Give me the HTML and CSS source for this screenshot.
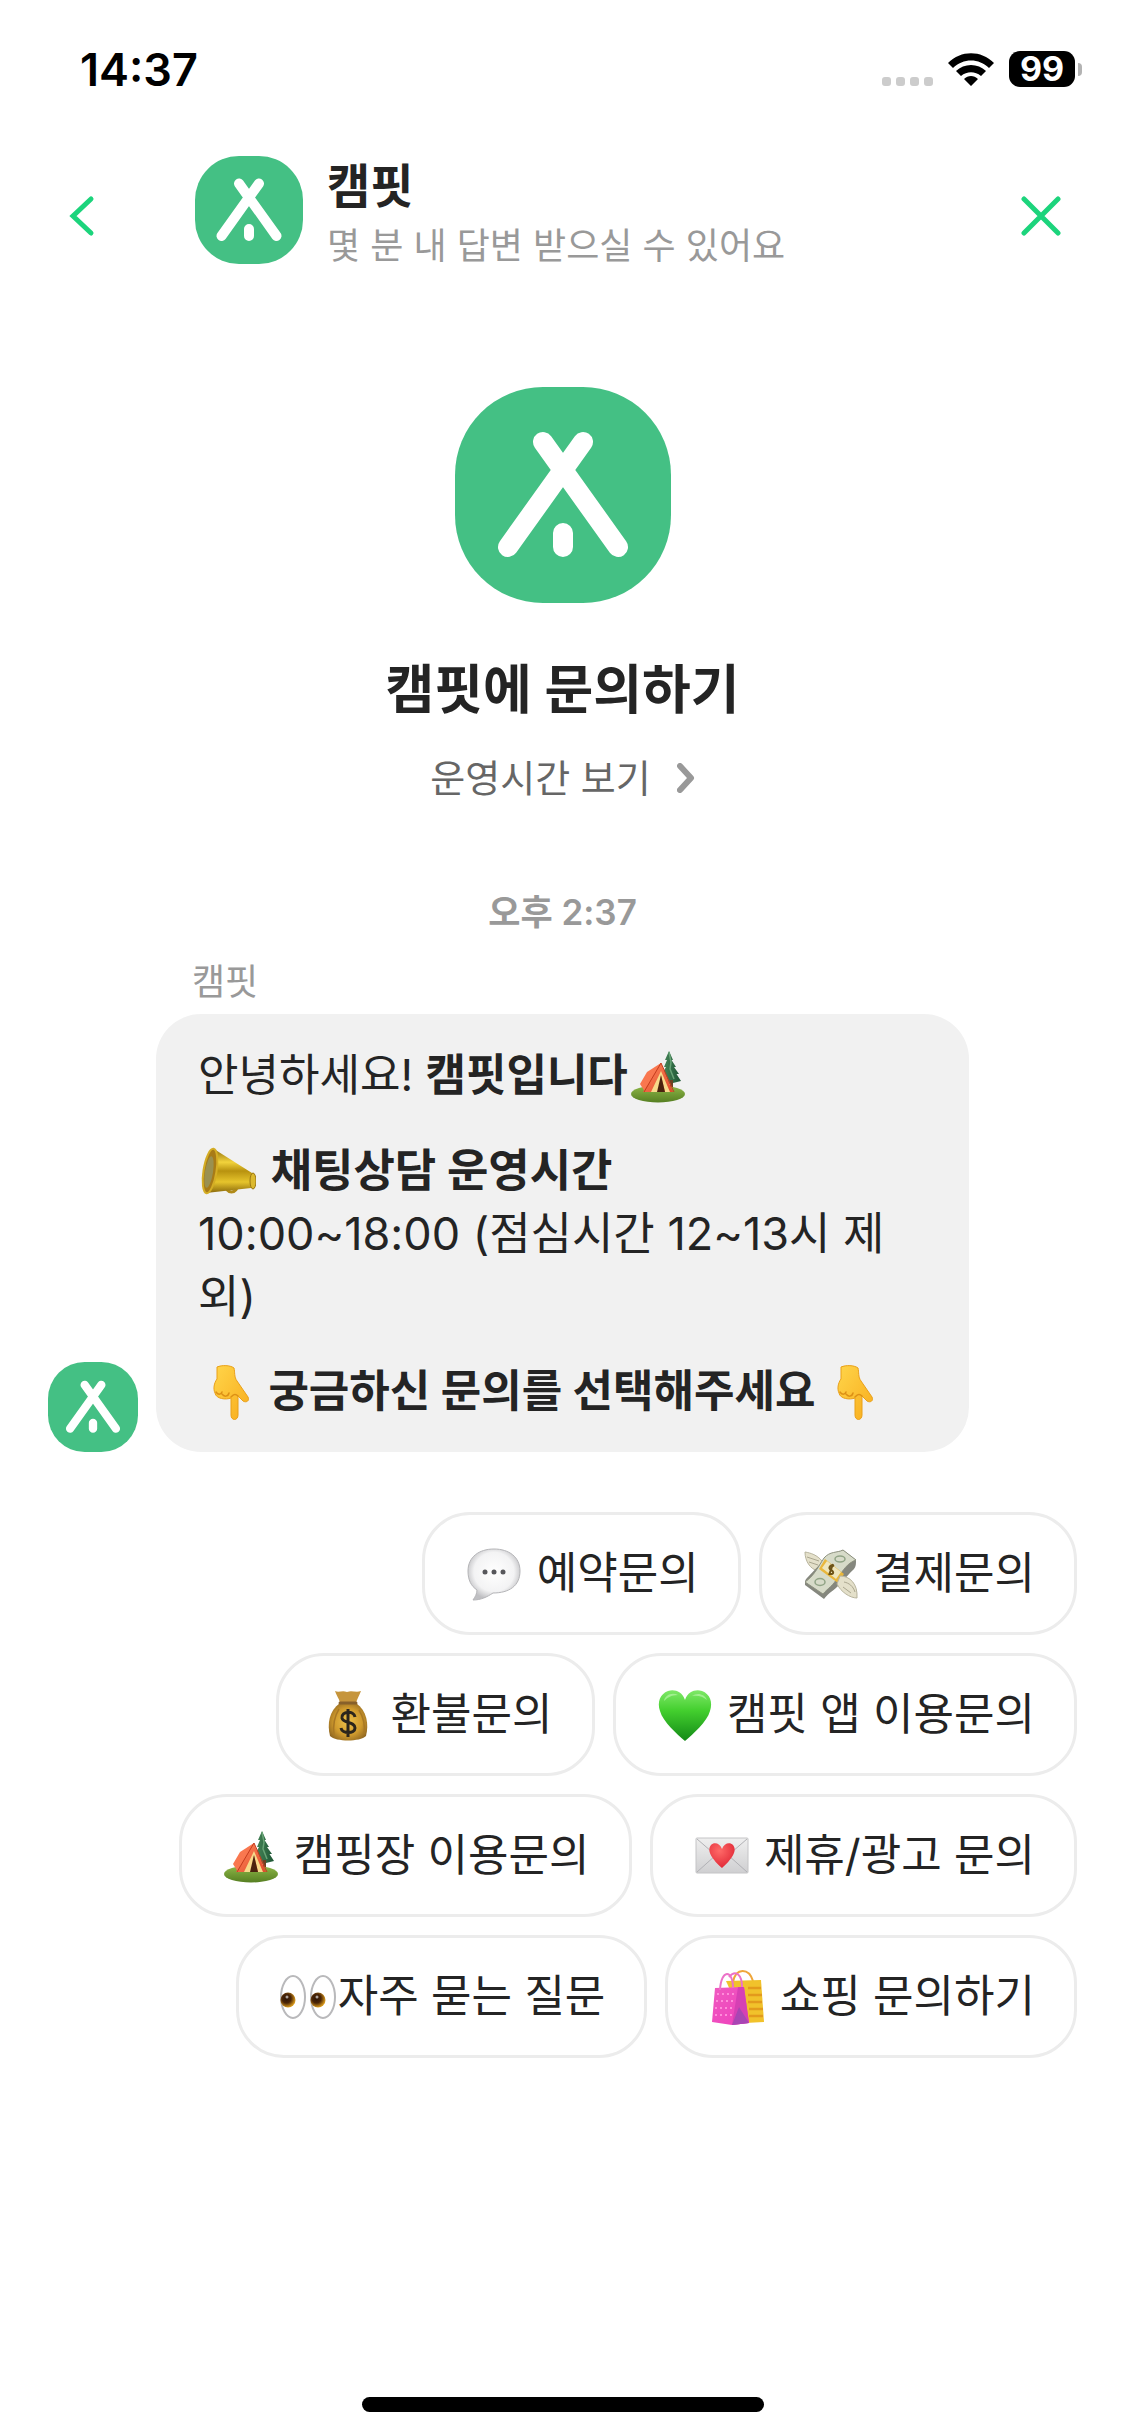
FILE: index.html
```html
<!DOCTYPE html>
<html lang="ko">
<head>
<meta charset="utf-8">
<meta name="viewport" content="width=device-width, initial-scale=1">
<title>캠핏 문의</title>
<link rel="stylesheet" href="styles.css">
</head>
<body>
<svg class="defs" aria-hidden="true">
  <defs>
    <linearGradient id="gold" x1="0" y1="0" x2="0" y2="1"><stop offset="0" stop-color="#8f6d0c"/><stop offset=".3" stop-color="#f2d33c"/><stop offset=".5" stop-color="#b8920f"/><stop offset=".75" stop-color="#e6c42c"/><stop offset="1" stop-color="#8a690b"/></linearGradient>
    <linearGradient id="tentRed" x1="0" y1="0" x2="1" y2="1"><stop offset="0" stop-color="#ff8a5c"/><stop offset="1" stop-color="#e2492b"/></linearGradient>
    <linearGradient id="grass" x1="0" y1="0" x2="0" y2="1"><stop offset="0" stop-color="#8fb848"/><stop offset="1" stop-color="#567f22"/></linearGradient>
    <linearGradient id="pine" x1="0" y1="0" x2="1" y2="0"><stop offset="0" stop-color="#4b8a5c"/><stop offset="1" stop-color="#1d5534"/></linearGradient>
    <linearGradient id="skin" x1="0" y1="0" x2="1" y2="1"><stop offset="0" stop-color="#ffd54a"/><stop offset="1" stop-color="#f8ac1c"/></linearGradient>
    <radialGradient id="speech" cx=".5" cy=".45" r=".55"><stop offset="0" stop-color="#fff"/><stop offset=".7" stop-color="#f3f3f4"/><stop offset="1" stop-color="#bfbfc2"/></radialGradient>
    <linearGradient id="heartGreen" x1="0" y1="0" x2="0" y2="1"><stop offset="0" stop-color="#7fe868"/><stop offset=".4" stop-color="#43cf2e"/><stop offset="1" stop-color="#138a17"/></linearGradient>
    <radialGradient id="bag" cx=".5" cy=".5" r=".6"><stop offset="0" stop-color="#eec24a"/><stop offset=".6" stop-color="#cf9a2d"/><stop offset="1" stop-color="#8d6420"/></radialGradient>
    <linearGradient id="paper" x1="0" y1="0" x2="0" y2="1"><stop offset="0" stop-color="#efefef"/><stop offset="1" stop-color="#cfcfd1"/></linearGradient>
    <radialGradient id="heartRed" cx=".4" cy=".3" r=".8"><stop offset="0" stop-color="#ff6a68"/><stop offset="1" stop-color="#dd2030"/></radialGradient>
    <radialGradient id="iris" cx=".4" cy=".4" r=".6"><stop offset="0" stop-color="#2b1304"/><stop offset=".5" stop-color="#4a2406"/><stop offset="1" stop-color="#d99a1c"/></radialGradient>
    <linearGradient id="pink" x1="0" y1="0" x2="1" y2="1"><stop offset="0" stop-color="#f05ac0"/><stop offset="1" stop-color="#ee3fbd"/></linearGradient>
  </defs>

  <symbol id="logo" viewBox="0 0 216 216">
    <rect width="216" height="216" rx="88" fill="#44c084"/>
    <path d="M88 55 163 160M128 55 53 160M108 146V160" fill="none" stroke="#fff" stroke-width="20" stroke-linecap="round"/>
  </symbol>

  <symbol id="tent" viewBox="0 0 56 56">
    <ellipse cx="28" cy="45" rx="27" ry="8.500" fill="url(#grass)"/>
    <path d="M39 2 43 11 41.500 11 46 18 44 18 49 25 46.500 25 51 32 39 35 31 31 34 25 32 25 36 18 34 18 37 11 35 11Z" fill="url(#pine)"/>
    <path d="M39 3 41 13 40 20 44 30" stroke="#68a476" stroke-width="1.500" fill="none"/>
    <path d="M40 31H43V38H40Z" fill="#6b4224"/>
    <path d="M17 23 31 14 15 43 10 35Z" fill="#f9774f"/>
    <path d="M31 14 13 43 43 43Z" fill="url(#tentRed)"/>
    <path d="M31 22 21 43H28L31 27 35 43H40Z" fill="#f7d98a"/>
    <path d="M31 26 27 43H35Z" fill="#4b230f"/>
    <path d="M31 14 14 43M31 14 44 43" stroke="#c53b1d" stroke-width="1"/>
  </symbol>

  <symbol id="megaphone" viewBox="0 0 56 56">
    <path d="M25 38C25 50 38 50 38 38" fill="none" stroke="#b08a18" stroke-width="3"/>
    <path d="M14 4 52 28C56 30 55 42 51 43L6 48C-1 38 4 8 14 4Z" fill="url(#gold)"/>
    <ellipse cx="10" cy="26" rx="6.500" ry="22.500" transform="rotate(9 10 26)" fill="#a87b17" stroke="#d4ad25" stroke-width="2"/>
    <ellipse cx="9" cy="27" rx="4" ry="16" transform="rotate(9 9 27)" fill="#9a9050"/>
    <ellipse cx="53" cy="36" rx="3" ry="8" fill="#dcb92e" stroke="#9a7611" stroke-width="1"/>
  </symbol>

  <symbol id="hand" viewBox="-2 0 56 56">
    <path d="M13 2C18 0 26 0 30 3 31 7 30 12 33 16L44 32C46 36 42 38 39 36L34 31V50C34 56 27 56 27 50V33C22 35 12 34 11 28 9 24 10 18 13 14Z" fill="url(#skin)" stroke="#e9a019" stroke-width="1"/>
    <path d="M12 27C14 30 17 30 18 27M18 29C20 32 24 32 25 28M27 32C29 30 31 28 34 31" fill="none" stroke="#dd9015" stroke-width="1.500" stroke-linecap="round"/>
  </symbol>

  <symbol id="bubble" viewBox="0 0 56 56">
    <path d="M28 2C43 2 54 10 54 24 54 39 43 46 27 46 21 50 15 53 7 53 9 50 11 47 11 43 5 39 2 33 2 24 2 10 13 2 28 2Z" fill="url(#speech)" stroke="#b5b5b8" stroke-width="1"/>
    <g fill="#57575b"><circle cx="19" cy="25" r="2.500"/><circle cx="28" cy="25" r="2.500"/><circle cx="37" cy="25" r="2.500"/></g>
  </symbol>

  <symbol id="cash" viewBox="0 0 56 56">
    <path d="M2 5C8 6 14 8 19 14L15 24C7 22 2 14 2 5Z" fill="#e4e0ca" stroke="#b8b49d" stroke-width="1"/>
    <path d="M4 10 16 14M6 15 15 18" stroke="#aaa68f" stroke-width="1"/>
    <path d="M21 13C27 6 34 6 40 3L53 13C53 17 53 19 51 22 46 27 42 31 37 37 31 44 26 45 21 52L2 38C2 34 2 33 4 31Z" fill="#85877e"/>
    <path d="M21 11C27 4 34 6 40 3L53 13C44 16 40 24 35 30 30 39 25 41 20 47L2 35C11 29 15 20 21 11Z" fill="#d7dbc9" stroke="#8d917f" stroke-width="1"/>
    <ellipse cx="37" cy="12" rx="5" ry="3" fill="none" stroke="#91a486" stroke-width="1.500"/>
    <ellipse cx="17" cy="35" rx="5" ry="3.500" fill="none" stroke="#91a486" stroke-width="1.500"/>
    <path d="M22 12 41 27 35 36 16 22Z" fill="#e9b73c"/>
    <path d="M24 14 38 25 33 32 19 21Z" fill="#efe6bd"/>
    <path d="M31 19C27 17 25 21 28 23 32 25 30 29 26 26M30 17 26 28" fill="none" stroke="#6e5418" stroke-width="2"/>
    <path d="M37 29C47 29 55 37 54 51 47 51 38 45 34 37Z" fill="#e4e0ca" stroke="#b8b49d" stroke-width="1"/>
    <path d="M41 35C46 36 50 39 52 45M40 40 48 46" fill="none" stroke="#aaa68f" stroke-width="1"/>
  </symbol>

  <symbol id="moneybag" viewBox="0 0 56 56">
    <path d="M20 15C9 23 7 36 10 48 16 54 40 54 46 48 49 36 47 23 36 15Z" fill="url(#bag)"/>
    <path d="M15 3C19 5 22 2 27 4 32 2 36 5 41 3 39 8 37 11 36 15H20C19 10 16 7 15 3Z" fill="#c6953c"/>
    <path d="M20 15H36" stroke="#87602a" stroke-width="3" stroke-linecap="round"/>
    <path d="M19 21C14 29 13 39 14 47M39 22C44 30 45 39 44 46" fill="none" stroke="#a87824" stroke-width="1.500"/>
    <path d="M35 29C34 22 21 23 22 30 23 36 35 33 35 40 35 46 22 46 21 40M28 21V49" fill="none" stroke="#2b251c" stroke-width="3"/>
  </symbol>

  <symbol id="heart" viewBox="0 0 56 56">
    <path d="M28 12C31 3 39 1 45 3 53 6 56 14 53 23 50 34 36 46 28 53 20 46 6 34 3 23 0 14 3 6 11 3 17 1 25 3 28 12Z" fill="url(#heartGreen)"/>
    <path d="M7 13C8 7 15 4 21 7 14 7 10 10 7 13ZM35 8C40 4 48 6 50 12 46 8 40 7 35 8Z" fill="#b6f5a6" opacity=".7"/>
  </symbol>

  <symbol id="letter" viewBox="0 0 56 56">
    <rect x="2" y="9" width="52" height="35" rx="1" fill="url(#paper)" stroke="#c4c4c6" stroke-width="1"/>
    <path d="M3 43 22 26M53 43 34 26M3 10 25 29Q28 31 31 29L53 10" fill="none" stroke="#b1b1b5" stroke-width="1"/>
    <path d="M28 20C30 14 36 13 39 16 44 22 37 31 28 39 19 31 12 22 17 16 20 13 26 14 28 20Z" fill="url(#heartRed)"/>
  </symbol>

  <symbol id="eyes" viewBox="0 0 56 56">
    <g fill="#fff" stroke="#b9b9bb" stroke-width="2"><ellipse cx="13" cy="27" rx="12" ry="21"/><ellipse cx="43" cy="27" rx="12" ry="21"/></g>
    <circle cx="8" cy="30" r="7.500" fill="url(#iris)"/><circle cx="38" cy="30" r="7.500" fill="url(#iris)"/>
    <circle cx="7" cy="27" r="1.500" fill="#fff" opacity=".6"/><circle cx="37" cy="27" r="1.500" fill="#fff" opacity=".6"/>
  </symbol>

  <symbol id="shopping" viewBox="0 0 56 56">
    <path d="M24 12C27-3 40-2 44 11" fill="none" stroke="#efa63a" stroke-width="2"/>
    <path d="M17 11 52 10 55 52 36 53Z" fill="#f1c22b"/>
    <path d="M39 18H52M39 25H53M39 32H53M40 39H54M40 46H54" stroke="#e39a1c" stroke-width="2.500"/>
    <path d="M6 18 35 17 40 53 23 55 3 52Z" fill="url(#pink)"/>
    <path d="M29 17 35 17 40 53 23 55Z" fill="#d640b4"/>
    <path d="M30 37 40 53 23 55Z" fill="#a846b4"/>
    <path d="M8 24H28M7 31H27M6 38H25M6 45H23" stroke="#ff8cda" stroke-width="2" stroke-dasharray="2 3"/>
    <path d="M11 20C12-1 24-1 24 18M20 7C27-1 33 5 33 17" fill="none" stroke="#ec72c8" stroke-width="2"/>
  </symbol>
</svg>

<div class="statusbar">
  <span class="clock">14:37</span>
  <div class="indicators">
    <svg width="51" height="33" viewBox="0 0 51 33" role="img" aria-label="신호 없음"><g fill="#ccc"><rect y="24" width="9" height="9" rx="3"/><rect x="14" y="24" width="9" height="9" rx="3"/><rect x="28" y="24" width="9" height="9" rx="3"/><rect x="42" y="24" width="9" height="9" rx="3"/></g></svg>
    <svg width="46" height="33" viewBox="0 0 46 33" role="img" aria-label="와이파이"><path d="M0 10C13-3 33-3 46 10L41 15C31 5 15 5 5 15ZM8 18C16 10 30 10 38 18L33 23C27 18 19 18 13 23ZM16 26C20 22 26 22 30 26L23 33Z"/></svg>
    <div class="battery"><span class="level">99</span><span class="nub"></span></div>
  </div>
</div>

<header class="topbar">
  <button class="icon-button" type="button" aria-label="뒤로"><svg width="26" height="42" viewBox="0 0 26 42"><path d="M22 4 4 21 22 38"/></svg></button>
  <svg class="logo logo-header" aria-hidden="true"><use href="#logo"/></svg>
  <div class="channel">
    <h1>캠핏</h1>
    <p>몇 분 내 답변 받으실 수 있어요</p>
  </div>
  <button class="icon-button close" type="button" aria-label="닫기"><svg width="40" height="40" viewBox="0 0 40 40"><path d="M3 3 37 37M37 3 3 37"/></svg></button>
</header>

<main>
  <section class="intro">
    <svg class="logo logo-large" aria-hidden="true"><use href="#logo"/></svg>
    <h2>캠핏에 문의하기</h2>
    <button class="hours" type="button">운영시간 보기<svg width="18" height="30" viewBox="0 0 18 30" aria-hidden="true"><path d="M3 3 14 15 3 27"/></svg></button>
  </section>

  <section class="chat">
    <time class="time" datetime="14:37">오후 2:37</time>
    <div class="message">
      <span class="sender">캠핏</span>
      <svg class="logo logo-avatar" aria-hidden="true"><use href="#logo"/></svg>
      <div class="balloon">
        <p>안녕하세요! <b>캠핏입니다</b><svg class="emoji"><use href="#tent"/></svg></p>
        <p class="schedule"><svg class="emoji"><use href="#megaphone"/></svg> <b>채팅상담 운영시간</b><br>10:00~18:00 (점심시간 12~13시 제외)</p>
        <p class="prompt"><svg class="emoji"><use href="#hand"/></svg> <b>궁금하신 문의를 선택해주세요</b> <svg class="emoji"><use href="#hand"/></svg></p>
      </div>
    </div>
    <div class="choices">
      <button type="button"><svg class="emoji"><use href="#bubble"/></svg> 예약문의</button>
      <button type="button"><svg class="emoji"><use href="#cash"/></svg> 결제문의</button>
      <button type="button"><svg class="emoji"><use href="#moneybag"/></svg> 환불문의</button>
      <button type="button"><svg class="emoji"><use href="#heart"/></svg> 캠핏 앱 이용문의</button>
      <button type="button"><svg class="emoji"><use href="#tent"/></svg> 캠핑장 이용문의</button>
      <button type="button"><svg class="emoji"><use href="#letter"/></svg> 제휴/광고 문의</button>
      <button type="button"><svg class="emoji"><use href="#eyes"/></svg>자주 묻는 질문</button>
      <button type="button"><svg class="emoji"><use href="#shopping"/></svg> 쇼핑 문의하기</button>
    </div>
  </section>
</main>
<div class="home-indicator"></div>
</body>
</html>
```
FILE: styles.css
```css
* { box-sizing: border-box; }

body {
  margin: 0;
  min-height: 100vh;
  display: flex;
  flex-direction: column;
  background: #fff;
  color: #242424;
  font-family: Inter, "Noto Sans CJK KR", sans-serif;
  font-size: 44px;
  line-height: 63px;
}

h1, h2, p { margin: 0; }

button {
  margin: 0;
  padding: 0;
  border: 0;
  background: none;
  color: inherit;
  font: inherit;
}

svg { flex: none; }
.defs { position: absolute; width: 0; height: 0; }

.statusbar {
  display: flex;
  align-items: center;
  justify-content: space-between;
  height: 138px;
  padding: 0 43px 0 80px;
  color: #000;
}
.clock { font-size: 45px; font-weight: 600; }
.indicators { display: flex; align-items: center; gap: 15px; }
.battery { display: flex; align-items: center; gap: 3px; }
.level {
  width: 66px;
  border-radius: 11px;
  background: #000;
  color: #fff;
  font-size: 34px;
  font-weight: 700;
  line-height: 36px;
  text-align: center;
}
.nub { width: 4px; height: 13px; border-radius: 0 4px 4px 0; background: #b3b3b3; }

.topbar {
  display: flex;
  align-items: center;
  height: 156px;
  padding: 0 64px 0 69px;
}
.icon-button { display: flex; width: 126px; }
.icon-button path { fill: none; stroke: #1cd47c; stroke-width: 5; stroke-linecap: round; }
.icon-button.close { justify-content: flex-end; }
.logo { display: block; }
.logo-header { width: 108px; height: 108px; margin-bottom: 12px; }
.channel { flex: 1; padding-left: 24px; }
.channel h1 { font-size: 47px; line-height: 60px; }
.channel p { color: #999; font-size: 36px; line-height: 60px; }

.intro {
  display: flex;
  flex-direction: column;
  align-items: center;
  padding-top: 93px;
}
.logo-large { width: 216px; height: 216px; margin-bottom: 51px; }
.intro h2 { font-size: 53px; line-height: 72px; }
.hours {
  display: flex;
  align-items: center;
  gap: 26px;
  margin-top: 22px;
  color: #666;
  font-size: 38px;
  line-height: 60px;
}
.hours path { fill: none; stroke: #999; stroke-width: 6; stroke-linecap: round; stroke-linejoin: round; }

.chat { padding: 77px 48px 0; }
.time {
  display: block;
  color: #999;
  font-size: 35px;
  font-weight: 600;
  line-height: 54px;
  text-align: center;
}
.message {
  display: grid;
  grid-template-columns: 90px minmax(0, 813px);
  column-gap: 18px;
  align-items: end;
  margin-top: 18px;
}
.sender {
  grid-column: 2;
  padding: 0 36px 6px;
  color: #999;
  font-size: 36px;
  line-height: 51px;
}
.logo-avatar { width: 90px; height: 90px; }
.balloon {
  display: grid;
  gap: 32px;
  padding: 30px 42px 29px;
  border-radius: 45px;
  background: #f1f1f1;
}
.emoji { width: 56px; height: 56px; margin: 0 2px; vertical-align: -14px; }
.schedule { font-size: 45px; }
.prompt { padding-left: 6px; }
.prompt .emoji { margin: 0 -2px; }

.choices {
  display: flex;
  flex-wrap: wrap;
  justify-content: flex-end;
  gap: 18px;
  margin: 60px 0 48px 108px;
}
.choices button {
  padding: 27px 39px;
  border: 3px solid #ececec;
  border-radius: 48px;
}

.home-indicator {
  width: 402px;
  height: 15px;
  margin: auto auto 24px;
  border-radius: 8px;
  background: #000;
}
```
